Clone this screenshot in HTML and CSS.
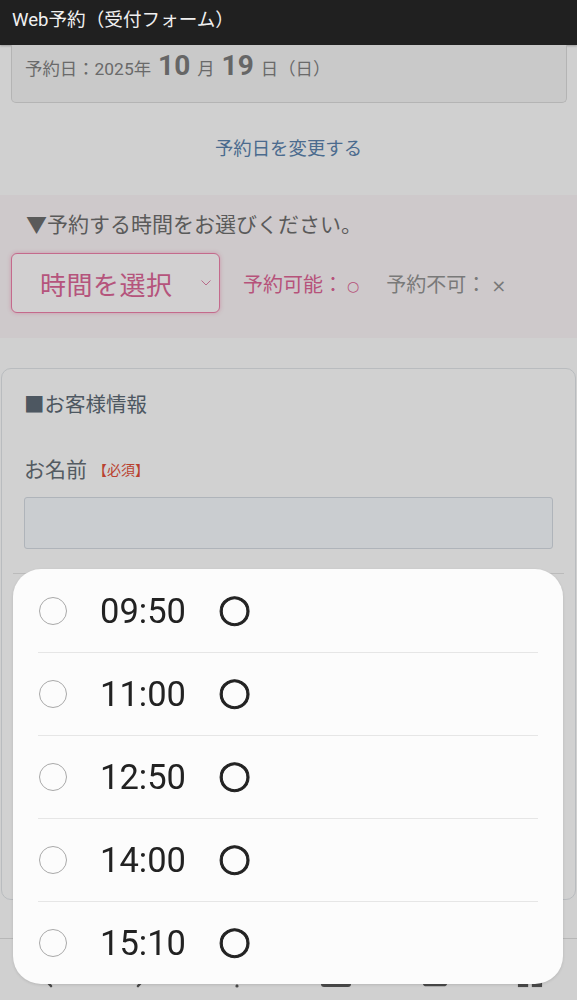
FILE: index.html
```html
<!DOCTYPE html>
<html lang="ja">
<head>
<meta charset="utf-8">
<title>Web予約（受付フォーム）</title>
<link rel="stylesheet" href="styles.css">
</head>
<body>
<header class="appbar">Web予約（受付フォーム）</header>

<main class="page">
  <div class="datebox">
    <span class="date-label">予約日：2025年</span>
    <span class="date-num">10</span>
    <span class="date-unit">月</span>
    <span class="date-num">19</span>
    <span class="date-unit">日（日）</span>
  </div>

  <div class="change-row"><a class="change-link">予約日を変更する</a></div>

  <section class="time-section">
    <p class="time-head">▼予約する時間をお選びください。</p>
    <div class="time-row">
      <div class="select">
        <span class="select-text">時間を選択</span>
        <svg class="chev" width="10" height="6" viewBox="0 0 10 6"><polyline points="0.5,0.5 5,5 9.5,0.5" fill="none" stroke="#b86b8a" stroke-width="1"/></svg>
      </div>
      <span class="legend ok">予約可能：<span class="sym-o">○</span></span>
      <span class="legend ng">予約不可：<span class="sym-x">×</span></span>
    </div>
  </section>

  <section class="card">
    <h2 class="card-title">■お客様情報</h2>
    <div class="field-label">お名前<span class="req">【必須】</span></div>
    <div class="input"></div>
    <div class="divider"></div>
  </section>

  <nav class="toolbar">
    <svg class="tb-icon" viewBox="0 0 26 26"><polyline points="17,2 7,13 17,24" fill="none" stroke="#4a4a4a" stroke-width="2.6" stroke-linecap="round" stroke-linejoin="round"/></svg>
    <svg class="tb-icon" viewBox="0 0 26 26"><polyline points="9,2 19,13 9,24" fill="none" stroke="#4a4a4a" stroke-width="2.6" stroke-linecap="round" stroke-linejoin="round"/></svg>
    <svg class="tb-icon" viewBox="0 0 26 26"><path d="M13 3 L13 20 M6 14 L13 21 L20 14" fill="none" stroke="#4a4a4a" stroke-width="2.6" stroke-linecap="round" stroke-linejoin="round"/><circle cx="13" cy="24" r="1.6" fill="#4a4a4a"/></svg>
    <svg class="tb-icon wide" viewBox="0 0 34 26"><rect x="2" y="8" width="30" height="17" rx="3" fill="#4a4a4a"/></svg>
    <svg class="tb-icon" viewBox="0 0 28 26"><rect x="2" y="3" width="24" height="21" rx="3" fill="none" stroke="#4a4a4a" stroke-width="2.4"/></svg>
    <svg class="tb-icon" viewBox="0 0 28 26"><rect x="1" y="2" width="11" height="11" fill="#4a4a4a"/><rect x="16" y="2" width="11" height="11" fill="#4a4a4a"/><rect x="1" y="15" width="11" height="11" fill="#4a4a4a"/><rect x="16" y="15" width="11" height="11" fill="#4a4a4a"/></svg>
  </nav>
</main>

<div class="sheet" role="listbox">
  <div class="opt"><span class="radio"></span><span class="opt-time">09:50</span><span class="opt-mark">○</span></div>
  <div class="opt"><span class="radio"></span><span class="opt-time">11:00</span><span class="opt-mark">○</span></div>
  <div class="opt"><span class="radio"></span><span class="opt-time">12:50</span><span class="opt-mark">○</span></div>
  <div class="opt"><span class="radio"></span><span class="opt-time">14:00</span><span class="opt-mark">○</span></div>
  <div class="opt"><span class="radio"></span><span class="opt-time">15:10</span><span class="opt-mark">○</span></div>
</div>
</body>
</html>
```

FILE: styles.css
```css
* { box-sizing: border-box; }

html, body {
  margin: 0;
  padding: 0;
  height: 1000px;
  overflow: hidden;
}

body {
  background: #d0d0d0;
  font-family: Roboto, "Noto Sans CJK JP", sans-serif;
  color: #555;
}

.appbar {
  height: 45px;
  background: #202020;
  color: #f0f0f0;
  font-size: 18.6px;
  line-height: 41px;
  padding-left: 12px;
  box-shadow: 0 1px 2px rgba(0,0,0,0.25);
}

.page {
  display: flex;
  flex-direction: column;
}

.datebox {
  margin: 0 10px 0 11px;
  height: 58px;
  background: #c9c9c9;
  border: 1px solid #b4b4b4;
  border-top: none;
  border-radius: 0 0 5px 5px;
  padding: 4px 0 0 13px;
  display: flex;
  align-items: baseline;
  color: #6a6a6a;
  line-height: 34px;
}

.date-label { font-size: 17.4px; }
.date-num {
  font-size: 28px;
  font-weight: 700;
  color: #666;
  margin: 0 7px 0 7px;
}
.date-unit { font-size: 17.4px; }

.change-row {
  height: 92px;
  display: flex;
  align-items: center;
  justify-content: center;
}

.change-link {
  font-size: 18.4px;
  color: #4b6b8e;
  margin-top: -4px;
}

.time-section {
  background: #cec9cb;
  height: 143px;
  padding: 15px 11px 0 11px;
}

.time-head {
  margin: 0;
  font-size: 21px;
  line-height: 30px;
  color: #5a5a5a;
  padding-left: 15px;
}

.time-row {
  margin-top: 13px;
  display: flex;
  align-items: center;
}

.select {
  width: 209px;
  height: 60px;
  border: 1px solid #c46a8c;
  border-radius: 6px;
  background: #d2d0d1;
  box-shadow: 0 0 4px rgba(200, 90, 130, 0.45);
  display: flex;
  align-items: center;
  padding-left: 28px;
}

.select-text {
  font-size: 26px;
  color: #b5547c;
  letter-spacing: 0.5px;
}

.chev {
  margin-left: auto;
  margin-right: 8px;
}

.legend {
  font-size: 20px;
  margin-left: 23px;
}
.legend.ok { color: #b6527a; }
.legend.ng { color: #797979; margin-left: 27px; }

.sym-o {
  font-family: "DejaVu Sans", sans-serif;
  font-size: 14px;
  vertical-align: 1px;
  margin-left: 4px;
}

.sym-x {
  font-family: "DejaVu Sans", sans-serif;
  font-size: 18px;
  margin-left: 5px;
}

.card {
  margin: 30px 1px 0 1px;
  height: 532px;
  border: 1px solid #b9bcbf;
  border-radius: 10px;
  background: #d1d1d1;
  padding: 21px 22px 0 22px;
}

.card-title {
  margin: 0;
  font-size: 20.5px;
  line-height: 30px;
  font-weight: 400;
  color: #4d5761;
}

.field-label {
  margin-top: 35px;
  font-size: 21px;
  line-height: 30px;
  color: #545b62;
}

.req {
  font-size: 14px;
  color: #b9412f;
  margin-left: 6px;
  vertical-align: 2px;
}

.input {
  margin-top: 12px;
  height: 52px;
  background: #cacdd0;
  border: 1px solid #afb4ba;
  border-radius: 3px;
}

.divider {
  margin: 24px -11px 0 -11px;
  border-top: 1px solid #bbbbbb;
}

.toolbar {
  margin-top: 38px;
  height: 62px;
  border-top: 1px solid #b7b7b7;
  display: flex;
  justify-content: space-around;
  align-items: flex-start;
  padding-top: 23px;
}

.tb-icon {
  width: 26px;
  height: 26px;
}
.tb-icon.wide { width: 34px; }

.sheet {
  position: fixed;
  left: 13px;
  top: 569px;
  width: 550px;
  background: #fcfcfc;
  border-radius: 28px;
  padding: 1px 25px 0 25px;
  box-shadow: 0 1px 3px rgba(0,0,0,0.12);
}

.opt {
  height: 83px;
  display: flex;
  align-items: center;
  border-bottom: 1px solid #e6e6e6;
}
.opt:last-child {
  border-bottom: none;
  height: 82px;
}

.radio {
  width: 28px;
  height: 28px;
  border-radius: 50%;
  border: 1.5px solid #a9a9a9;
  margin-left: 1px;
  flex: none;
}

.opt-time {
  margin-left: 33px;
  font-family: Roboto, sans-serif;
  font-size: 34.5px;
  color: #222;
  width: 118px;
}

.opt-mark {
  font-family: "DejaVu Sans", sans-serif;
  font-size: 38px;
  line-height: 1;
  color: #222;
  -webkit-text-stroke: 1px #222;
  padding-bottom: 7px;
}
```
